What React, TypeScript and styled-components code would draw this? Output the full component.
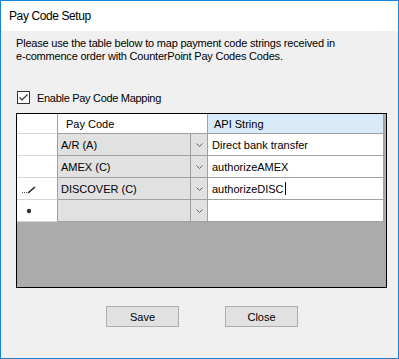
import styled, { createGlobalStyle } from "styled-components"

const GlobalStyle = createGlobalStyle`
  html, body {
    margin: 0;
    padding: 0;
    background: #ffffff;
  }
`;

const Window = styled.div`
  width: 399px;
  height: 359px;
  box-sizing: border-box;
  border: 1px solid #1883d7;
  background: #f0f0f0;
  display: flex;
  flex-direction: column;
  font-family: "Liberation Sans", Arial, sans-serif;
  font-size: 11px;
  color: #000;
`;

const TitleBar = styled.div`
  height: 30px;
  flex: none;
  background: #fff;
  display: flex;
  align-items: center;
  padding-left: 8px;
  font-size: 12px;
  letter-spacing: -0.4px;
`;

const Content = styled.div`
  flex: 1;
  display: flex;
  flex-direction: column;
  padding: 6px 0 0 15px;
`;

const Intro = styled.p`
  margin: 0;
  line-height: 13px;
  white-space: nowrap;
  letter-spacing: -0.2px;
`;

const CheckRow = styled.label`
  margin-top: 28px;
  height: 13px;
  display: flex;
  align-items: center;
  gap: 7px;
  padding-left: 1px;
  letter-spacing: -0.3px;
`;

const CheckBox = styled.span`
  width: 13px;
  height: 13px;
  box-sizing: border-box;
  border: 1px solid #333;
  background: #fff;
  display: flex;
  align-items: center;
  justify-content: center;
`;

const Grid = styled.div`
  margin-top: 9px;
  width: 371px;
  height: 175px;
  box-sizing: border-box;
  border: 1px solid #000;
  background: #ababab;
`;

const Row = styled.div<{ $header?: boolean }>`
  display: grid;
  grid-template-columns: 41px 150px 176px;
  height: ${p => (p.$header ? 20 : 22)}px;
`;

const RowHead = styled.div`
  background: #fff;
  border-right: 1px solid #a0a0a0;
  border-bottom: 1px solid #d6d6d6;
  display: flex;
  align-items: center;
  padding-left: 4px;
`;

const HeadCell = styled.div<{ $selected?: boolean }>`
  background: ${p => (p.$selected ? "#d9eaf8" : "#fff")};
  border-right: 1px solid #a0a0a0;
  border-bottom: 1px solid #a0a0a0;
  display: flex;
  align-items: center;
  padding-left: ${p => (p.$selected ? 6 : 8)}px;
`;

const ComboCell = styled.div`
  background: #e1e1e1;
  border-right: 1px solid #a0a0a0;
  border-bottom: 1px solid #a0a0a0;
  display: flex;
`;

const ComboText = styled.div`
  flex: 1;
  display: flex;
  align-items: center;
  padding-left: 3px;
`;

const DropButton = styled.div`
  width: 16px;
  border-left: 1px solid #a0a0a0;
  display: flex;
  align-items: center;
  justify-content: center;
`;

const TextCell = styled.div`
  background: #fff;
  border-right: 1px solid #a0a0a0;
  border-bottom: 1px solid #a0a0a0;
  display: flex;
  align-items: center;
  padding-left: 4px;
`;

const Caret = styled.span`
  display: inline-block;
  width: 1px;
  height: 13px;
  background: #000;
  margin-left: 1px;
`;

const Buttons = styled.div`
  margin-top: 18px;
  display: flex;
  justify-content: center;
  gap: 46px;
  padding-left: 5px;
  padding-right: 15px;
`;

const Button = styled.button`
  width: 73px;
  height: 21px;
  box-sizing: border-box;
  border: 1px solid #adadad;
  background: #e1e1e1;
  font-family: "Liberation Sans", Arial, sans-serif;
  font-size: 11px;
  color: #000;
  padding: 0;
`;

const Chevron = () => (
  <svg width="7" height="4" viewBox="0 0 7 4">
    <path d="M0.5 0.5 L3.5 3.5 L6.5 0.5" fill="none" stroke="#606060" strokeWidth="1" />
  </svg>
);

const Pencil = () => (
  <svg width="16" height="10" viewBox="0 0 16 10">
    <rect x="1" y="8" width="1" height="1" fill="#555" />
    <rect x="3" y="8" width="1" height="1" fill="#555" />
    <rect x="5" y="8" width="1" height="1" fill="#555" />
    <path d="M7 9 L14 3" stroke="#222" strokeWidth="1.6" />
  </svg>
);

const NewRow = () => (
  <svg width="6" height="6" viewBox="0 0 6 6" style={{ marginLeft: 5 }}>
    <circle cx="3" cy="3" r="2.2" fill="#333" />
  </svg>
);

const rows = [
  { code: "A/R (A)", api: "Direct bank transfer", mark: null },
  { code: "AMEX (C)", api: "authorizeAMEX", mark: null },
  { code: "DISCOVER (C)", api: "authorizeDISC", mark: "edit" },
  { code: "", api: "", mark: "new" },
];

export default function App() {
  return (
    <>
      <GlobalStyle />
      <Window>
        <TitleBar>Pay Code Setup</TitleBar>
        <Content>
          <Intro>
            Please use the table below to map payment code strings received in
            <br />
            e-commence order with CounterPoint Pay Codes Codes.
          </Intro>
          <CheckRow>
            <CheckBox>
              <svg width="11" height="11" viewBox="0 0 11 11">
                <path d="M1.5 5.5 L4 8 L9.5 2.5" fill="none" stroke="#333" strokeWidth="1.2" />
              </svg>
            </CheckBox>
            Enable Pay Code Mapping
          </CheckRow>
          <Grid>
            <Row $header>
              <RowHead />
              <HeadCell>Pay Code</HeadCell>
              <HeadCell $selected>API String</HeadCell>
            </Row>
            {rows.map((r, i) => (
              <Row key={i}>
                <RowHead>
                  {r.mark === "edit" && <Pencil />}
                  {r.mark === "new" && <NewRow />}
                </RowHead>
                <ComboCell>
                  <ComboText>{r.code}</ComboText>
                  <DropButton>
                    <Chevron />
                  </DropButton>
                </ComboCell>
                <TextCell>
                  {r.api}
                  {r.mark === "edit" && <Caret />}
                </TextCell>
              </Row>
            ))}
          </Grid>
          <Buttons>
            <Button>Save</Button>
            <Button>Close</Button>
          </Buttons>
        </Content>
      </Window>
    </>
  )
}
